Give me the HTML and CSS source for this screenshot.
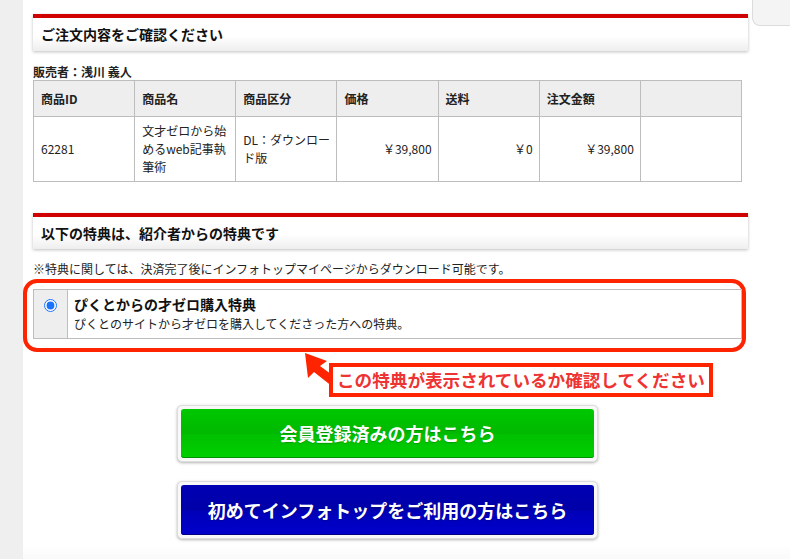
FILE: index.html
```html
<!DOCTYPE html>
<html lang="ja">
<head>
    <meta charset="UTF-8">
    <meta name="viewport" content="width=device-width, initial-scale=1.0">
    <title>ご注文内容の確認</title>
    <link rel="stylesheet" href="styles.css">
</head>
<body>
    <div class="page">
        <div class="side-strip"></div>

        <div class="main">
            <div class="section-head">
                <h2>ご注文内容をご確認ください</h2>
            </div>

            <p class="seller">販売者：浅川 義人</p>
            <table class="order-table">
                <tr>
                    <th>商品ID</th>
                    <th>商品名</th>
                    <th>商品区分</th>
                    <th>価格</th>
                    <th>送料</th>
                    <th>注文金額</th>
                    <th></th>
                </tr>
                <tr>
                    <td>62281</td>
                    <td>文才ゼロから始めるweb記事執筆術</td>
                    <td>DL：ダウンロード版</td>
                    <td class="price">￥39,800</td>
                    <td class="price">￥0</td>
                    <td class="price">￥39,800</td>
                    <td></td>
                </tr>
            </table>

            <div class="section-head second">
                <h2>以下の特典は、紹介者からの特典です</h2>
            </div>

            <p class="note">※特典に関しては、決済完了後にインフォトップマイページからダウンロード可能です。</p>

            <div class="bonus-frame">
                <table class="bonus-table">
                    <tr>
                        <td class="bonus-check"><input type="radio" name="bonus" checked></td>
                        <td class="bonus-body">
                            <div class="bonus-title">ぴくとからの才ゼロ購入特典</div>
                            <div class="bonus-desc">ぴくとのサイトから才ゼロを購入してくださった方への特典。</div>
                        </td>
                    </tr>
                </table>
            </div>

            <div class="callout-row">
                <svg class="callout-arrow" width="40" height="36" viewBox="0 0 40 36">
                    <polygon points="2,2 5,27 11,21 30,36 36,29 17,15 24,10" fill="#ff2400"/>
                </svg>
                <span class="callout">この特典が表示されているか確認してください</span>
            </div>

            <div class="buttons">
                <a href="#" class="btn-wrap"><span class="btn btn-green">会員登録済みの方はこちら</span></a>
                <a href="#" class="btn-wrap"><span class="btn btn-blue">初めてインフォトップをご利用の方はこちら</span></a>
            </div>
        </div>

        <div class="side-panel"></div>
    </div>
</body>
</html>
```

FILE: styles.css
```css
body {
    margin: 0;
    font-family: "Noto Sans CJK JP", sans-serif;
    color: #222;
    background: #fff;
}

.page {
    display: flex;
    align-items: flex-start;
    min-height: 559px;
    background: linear-gradient(to bottom, #fff 545px, #fafafa 559px);
}

.side-strip {
    width: 23px;
    align-self: stretch;
    background: #efefef;
    flex-shrink: 0;
}

.main {
    width: 715px;
    padding: 14px 0 0 10px;
    flex-shrink: 0;
}

.side-panel {
    flex: 1;
    margin-left: 4px;
    height: 25px;
    background: #f4f4f4;
    border-left: 1px solid #dcdcdc;
    border-bottom: 1px solid #dcdcdc;
    border-bottom-left-radius: 8px;
}

/* section headings */
.section-head {
    border-top: 4px solid #d00000;
    background: linear-gradient(to bottom, #fff 55%, #eeeeee);
    box-shadow: 0 1px 3px rgba(0, 0, 0, 0.25);
}

.section-head h2 {
    margin: 0;
    padding-left: 8px;
    font-size: 14px;
    font-weight: bold;
    line-height: 33px;
    color: #111;
}

.section-head.second {
    margin-top: 31px;
}

.section-head.second h2 {
    line-height: 32px;
}

.seller {
    margin: 13px 0 0;
    font-size: 12px;
    font-weight: bold;
    line-height: 16px;
}

/* order table */
.order-table {
    width: 709px;
    border-collapse: collapse;
    table-layout: fixed;
    font-size: 12px;
}

.order-table th,
.order-table td {
    border: 1px solid #bdbdbd;
    padding: 5px 6px 5px 7px;
    text-align: left;
    line-height: 18px;
    vertical-align: middle;
}

.order-table th {
    height: 25px;
    background: #eeeeee;
    font-weight: bold;
}

.order-table td {
    height: 53px;
}

.order-table td.price {
    text-align: right;
}

.note {
    margin: 12px 0 0;
    font-size: 12px;
    line-height: 16px;
}

/* bonus */
.bonus-frame {
    margin: 2px 0 0 -10px;
    width: 709px;
    border: 4px solid #ff2400;
    border-radius: 14px;
    padding: 6px 0 9px 6px;
}

.bonus-table {
    width: 709px;
    border-collapse: collapse;
}

.bonus-table td {
    border: 1px solid #bdbdbd;
}

.bonus-check {
    width: 33px;
    background: #eeeeee;
    text-align: center;
    vertical-align: top;
    padding: 0;
}

.bonus-check input {
    margin: 9px 0 0;
    width: 13px;
    height: 13px;
    accent-color: #1a73ff;
}

.bonus-body {
    padding: 4px 6px 4px 6px;
}

.bonus-title {
    font-size: 14px;
    font-weight: bold;
    line-height: 20px;
    color: #111;
}

.bonus-desc {
    font-size: 12px;
    line-height: 20px;
}

/* callout */
.callout-row {
    position: relative;
    margin-top: 11px;
    padding-left: 296px;
}

.callout-arrow {
    position: absolute;
    left: 270px;
    top: -12px;
}

.callout {
    position: relative;
    display: inline-block;
    border: 4px solid #ff2400;
    background: #fff;
    padding: 0 4px;
    font-size: 17.6px;
    font-weight: bold;
    line-height: 26px;
    color: #ee3333;
}

/* buttons */
.buttons {
    display: flex;
    flex-direction: column;
    align-items: flex-start;
    gap: 19px;
    margin: 8px 0 0 144px;
}

.btn-wrap {
    display: block;
    width: 413px;
    padding: 3px;
    background: #f8f8f8;
    border: 1px solid #dddddd;
    border-radius: 5px;
    box-shadow: 0 1px 3px rgba(0, 0, 0, 0.3);
    text-decoration: none;
}

.btn {
    display: block;
    height: 49px;
    line-height: 49px;
    border-radius: 3px;
    text-align: center;
    color: #fff;
    font-size: 18px;
    font-weight: bold;
    text-shadow: 0 1px 1px rgba(0, 0, 0, 0.2);
}

.btn-green {
    background: linear-gradient(to bottom, #00c800 0%, #00b800 50%, #00c000 52%, #00d000 100%);
    box-shadow: inset 0 -1px 0 #009000;
}

.btn-blue {
    height: 50px;
    line-height: 50px;
    background: linear-gradient(to bottom, #0000b4 0%, #0000a8 50%, #0000b8 52%, #0000cc 100%);
    box-shadow: inset 0 -1px 0 #000080;
}
```
